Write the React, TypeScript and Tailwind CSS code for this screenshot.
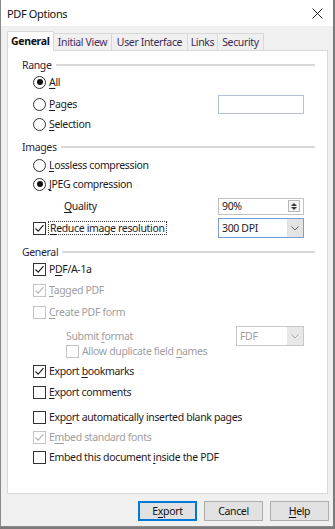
import React from "react";

const F = { fontFamily: '"Noto Sans", "Open Sans", Arial, sans-serif' };

function U({ children }: { children: React.ReactNode }) {
  return <span className="underline decoration-1 underline-offset-[2px]">{children}</span>;
}

function Radio({ checked }: { checked?: boolean }) {
  return (
    <span className="w-[13px] h-[13px] rounded-full border border-[#333333] bg-white flex items-center justify-center shrink-0">
      {checked && <span className="w-[6px] h-[6px] rounded-full bg-[#111111]" />}
    </span>
  );
}

function Check({ checked, disabled }: { checked?: boolean; disabled?: boolean }) {
  return (
    <span
      className={
        disabled
          ? "w-[13px] h-[13px] border border-[#c4c4c4] bg-white flex items-center justify-center shrink-0"
          : "w-[13px] h-[13px] border border-[#333333] bg-white flex items-center justify-center shrink-0"
      }
    >
      {checked && (
        <svg width="11" height="11" viewBox="0 0 11 11">
          <path d="M1.5 5.5 L4.2 8.2 L9.5 2.2" fill="none" stroke={disabled ? "#b5b5b5" : "#222222"} strokeWidth="1.2" />
        </svg>
      )}
    </span>
  );
}

function Heading({ label, mt }: { label: string; mt: string }) {
  return (
    <div className={`${mt} h-[16px] flex items-center pl-[14px] pr-[12px] gap-[4px]`}>
      <span className="text-[#2d1f3d]">{label}</span>
      <span className="flex-1 h-[2px] bg-[#d9d9d9]" />
    </div>
  );
}

function Row({ mt, children, right }: { mt: string; children: React.ReactNode; right?: React.ReactNode }) {
  return (
    <div className={`${mt} h-[16px] flex items-center pl-[25px] pr-[23px]`}>
      <div className="flex items-center gap-[3px] flex-1">{children}</div>
      {right}
    </div>
  );
}

export default function App() {
  return (
    <div className="w-[335px] h-[529px] bg-[#7a7a7a] text-[10.5px] tracking-[-0.35px] text-[#1e1a24] leading-none" style={F}>
      <div className="w-[333px] h-[527px] border-l border-b border-[#8a8a8a] bg-[#f0f0f0] flex flex-col">
        {/* title bar */}
        <div className="h-[26px] bg-white flex items-center justify-between pl-[6px] pr-[10px] shrink-0">
          <span className="text-[11px] text-[#111111]">PDF Options</span>
          <svg width="11" height="11" viewBox="0 0 11 11">
            <path d="M0.5 0.5 L10.5 10.5 M10.5 0.5 L0.5 10.5" stroke="#222" strokeWidth="1" />
          </svg>
        </div>

        {/* tabs */}
        <div className="pl-[6px] pt-[5px] flex items-end h-[24px] shrink-0 relative z-10">
          <div className="w-[47px] bg-white border border-b-0 border-[#d9d9d9] flex items-center pl-[3px] font-bold text-[#111111] mb-[-1px] h-[20px]">
            General
          </div>
          <div className="h-[17px] w-[58px] bg-[#f0f0f0] border border-l-0 border-b-0 border-[#d9d9d9] flex items-center justify-center text-[#4a2d5c]">
            Initial View
          </div>
          <div className="h-[17px] w-[76px] bg-[#f0f0f0] border border-l-0 border-b-0 border-[#d9d9d9] flex items-center justify-center text-[#3d2a52]">
            User Interface
          </div>
          <div className="h-[17px] w-[30px] bg-[#f0f0f0] border border-l-0 border-b-0 border-[#d9d9d9] flex items-center justify-center text-[#3d2a52]">
            Links
          </div>
          <div className="h-[17px] w-[46px] bg-[#f0f0f0] border border-l-0 border-b-0 border-[#d9d9d9] flex items-center justify-center text-[#3d2a52]">
            Security
          </div>
        </div>

        {/* panel */}
        <div className="ml-[6px] w-[321px] h-[444px] bg-white border border-[#d9d9d9] flex flex-col shrink-0">
          <Heading label="Range" mt="mt-[6px]" />
          <Row mt="mt-[1px]">
            <Radio checked />
            <span><U>A</U>ll</span>
          </Row>
          <Row
            mt="mt-[6px]"
            right={<div className="w-[86px] h-[19px] border border-[#b3c1d8] bg-white" />}
          >
            <Radio />
            <span><U>P</U>ages</span>
          </Row>
          <Row mt="mt-[4px]">
            <Radio />
            <span><U>S</U>election</span>
          </Row>

          <Heading label="Images" mt="mt-[7px]" />
          <Row mt="mt-[2px]">
            <Radio />
            <span><U>L</U>ossless compression</span>
          </Row>
          <Row mt="mt-[3px]">
            <Radio checked />
            <span><U>J</U>PEG compression</span>
          </Row>
          <div className="mt-[6px] h-[16px] flex items-center pl-[56px] pr-[23px]">
            <span className="flex-1"><U>Q</U>uality</span>
            <div className="w-[86px] h-[17px] border border-[#c2c2c2] bg-white flex items-center justify-between pl-[3px] pr-[3px]">
              <span>90%</span>
              <span className="w-[12px] h-[12px] border border-[#b8b8b8] bg-[#f4f4f4] flex flex-col items-center justify-center gap-[1px]">
                <svg width="6" height="3" viewBox="0 0 6 3"><path d="M0 3 L3 0 L6 3 Z" fill="#333" /></svg>
                <svg width="6" height="3" viewBox="0 0 6 3"><path d="M0 0 L6 0 L3 3 Z" fill="#333" /></svg>
              </span>
            </div>
          </div>
          <div className="mt-[6px] h-[16px] flex items-center pl-[25px] pr-[23px]">
            <div className="flex items-center gap-[2px] flex-1">
              <Check checked />
              <span className="border border-dotted border-[#444] px-[1px] h-[14px] flex items-center"><U>R</U>educe image resolution</span>
            </div>
            <div className="w-[86px] h-[20px] border border-[#7a9fd6] bg-white flex items-center justify-between pl-[3px]">
              <span>300 DPI</span>
              <span className="w-[16px] h-[18px] bg-[#e3e3e3] flex items-center justify-center">
                <svg width="8" height="5" viewBox="0 0 8 5"><path d="M0.5 0.5 L4 4 L7.5 0.5" fill="none" stroke="#666" strokeWidth="1" /></svg>
              </span>
            </div>
          </div>

          <Heading label="General" mt="mt-[8px]" />
          <Row mt="mt-[1px]">
            <Check checked />
            <span>P<U>D</U>F/A-1a</span>
          </Row>
          <Row mt="mt-[5px]">
            <Check checked disabled />
            <span className="text-[#a0a0a0]"><U>T</U>agged PDF</span>
          </Row>
          <Row mt="mt-[6px]">
            <Check disabled />
            <span className="text-[#a0a0a0]"><U>C</U>reate PDF form</span>
          </Row>
          <div className="mt-[8px] h-[16px] flex items-center pl-[58px] pr-[23px]">
            <span className="flex-1 text-[#a0a0a0]">Submit <U>f</U>ormat</span>
            <div className="w-[68px] h-[20px] border border-[#c8c8c8] bg-white flex items-center justify-between pl-[3px]">
              <span className="text-[#a0a0a0]">FDF</span>
              <span className="w-[16px] h-[18px] bg-[#e8e8e8] flex items-center justify-center">
                <svg width="8" height="5" viewBox="0 0 8 5"><path d="M0.5 0.5 L4 4 L7.5 0.5" fill="none" stroke="#aaa" strokeWidth="1" /></svg>
              </span>
            </div>
          </div>
          <div className="mt-[-1px] h-[16px] flex items-center pl-[58px] gap-[3px]">
            <Check disabled />
            <span className="text-[#a0a0a0]">Allow duplicate field <U>n</U>ames</span>
          </div>
          <Row mt="mt-[4px]">
            <Check checked />
            <span>Export <U>b</U>ookmarks</span>
          </Row>
          <Row mt="mt-[5px]">
            <Check />
            <span><U>E</U>xport comments</span>
          </Row>
          <Row mt="mt-[9px]">
            <Check />
            <span>Exp<U>o</U>rt automatically inserted blank pages</span>
          </Row>
          <Row mt="mt-[4px]">
            <Check checked disabled />
            <span className="text-[#a0a0a0]">E<U>m</U>bed standard fonts</span>
          </Row>
          <Row mt="mt-[4px]">
            <Check />
            <span>Embed this document <U>i</U>nside the PDF</span>
          </Row>
        </div>

        {/* buttons */}
        <div className="flex justify-end gap-[7px] pr-[4px] mt-[7px]">
          <button className="w-[59px] h-[20px] border border-[#0078d7] bg-[#e1e1e1] flex items-center justify-center text-[#111] shadow-[inset_0_0_0_1px_#0078d7]">
            <span>E<U>x</U>port</span>
          </button>
          <button className="w-[59px] h-[20px] border border-[#adadad] bg-[#e1e1e1] flex items-center justify-center text-[#111]">
            Cancel
          </button>
          <button className="w-[59px] h-[20px] border border-[#adadad] bg-[#e1e1e1] flex items-center justify-center text-[#111]">
            <span><U>H</U>elp</span>
          </button>
        </div>
      </div>
    </div>
  );
}
